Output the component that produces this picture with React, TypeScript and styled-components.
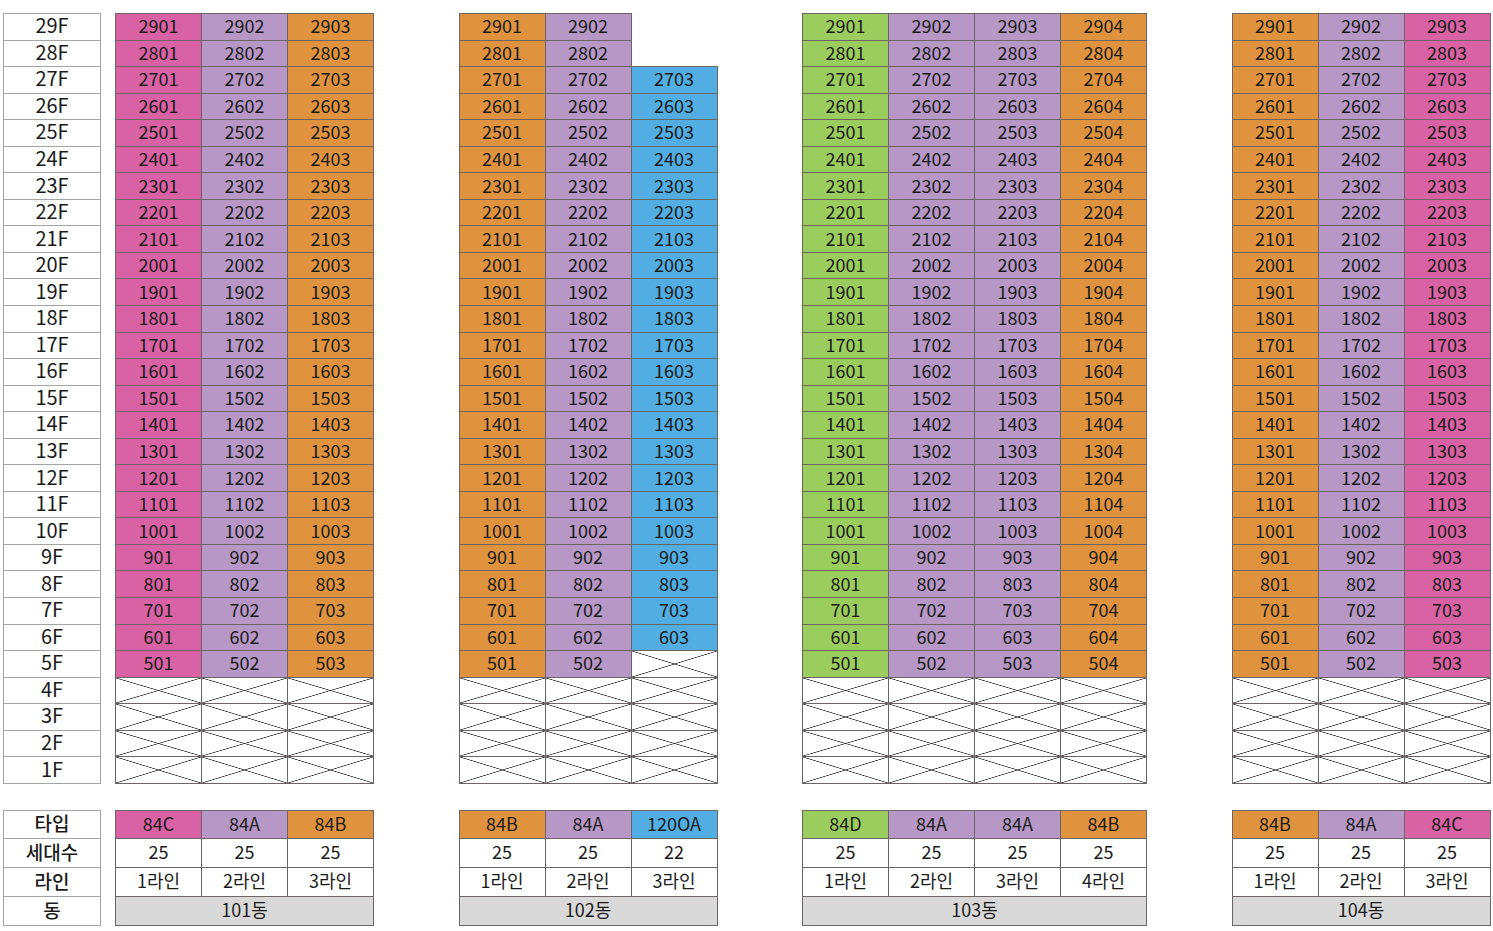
import styled, { createGlobalStyle, css } from "styled-components";

const GlobalStyle = createGlobalStyle`
    html, body {
        margin: 0;
        background: #fff;
    }
    body {
        font-family: "Noto Sans CJK KR", "Noto Sans", sans-serif;
        color: #1b1b1b;
    }
`

const COLORS: Record<string, string> = {
    pink: "#d862a3",
    lavender: "#b697c6",
    orange: "#e0933f",
    blue: "#52ade2",
    green: "#9bcd5e",
}

const ROW_H = 26.55
const TOP = 29

type Line = { color: string; type: string; from: number; to: number }
type Building = { name: string; lines: Line[] }

const buildings: Building[] = [
    {
        name: "101동",
        lines: [
            { color: "pink", type: "84C", from: 5, to: 29 },
            { color: "lavender", type: "84A", from: 5, to: 29 },
            { color: "orange", type: "84B", from: 5, to: 29 },
        ],
    },
    {
        name: "102동",
        lines: [
            { color: "orange", type: "84B", from: 5, to: 29 },
            { color: "lavender", type: "84A", from: 5, to: 29 },
            { color: "blue", type: "120OA", from: 6, to: 27 },
        ],
    },
    {
        name: "103동",
        lines: [
            { color: "green", type: "84D", from: 5, to: 29 },
            { color: "lavender", type: "84A", from: 5, to: 29 },
            { color: "lavender", type: "84A", from: 5, to: 29 },
            { color: "orange", type: "84B", from: 5, to: 29 },
        ],
    },
    {
        name: "104동",
        lines: [
            { color: "orange", type: "84B", from: 5, to: 29 },
            { color: "lavender", type: "84A", from: 5, to: 29 },
            { color: "pink", type: "84C", from: 5, to: 29 },
        ],
    },
]

const floors = Array.from({ length: TOP }, (_, i) => TOP - i)

const Page = styled.div`
    padding: 14px 0 0 4px;
    display: flex;
    flex-direction: column;
    gap: 27px;
`

const Section = styled.div`
    display: flex;
    align-items: flex-start;
`

const Buildings = styled.div`
    display: flex;
    gap: 85.5px;
    margin-left: 15px;
`

const LabelColumn = styled.div<{ $rows: string }>`
    display: grid;
    grid-template-columns: 97px;
    grid-template-rows: ${p => p.$rows};
`

const LabelCell = styled.div<{ $size?: number; $weight?: number }>`
    border: 1px solid #a4a4a4;
    margin: -1px 0 0 -1px;
    padding-bottom: 3px;
    display: flex;
    align-items: center;
    justify-content: center;
    font-size: ${p => p.$size ?? 20}px;
    font-weight: ${p => p.$weight ?? 400};
    line-height: 1;
`

const Tower = styled.div<{ $cols: number; $rows: string }>`
    display: grid;
    grid-template-columns: repeat(${p => p.$cols}, 86px);
    grid-template-rows: ${p => p.$rows};
`

const crossed = css`
    background:
        linear-gradient(to top right, transparent calc(50% - 0.7px), #2a2a2a 50%, transparent calc(50% + 0.7px)),
        linear-gradient(to bottom right, transparent calc(50% - 0.7px), #2a2a2a 50%, transparent calc(50% + 0.7px)),
        #fff;
`

const Unit = styled.div<{ $bg?: string; $crossed?: boolean; $empty?: boolean; $span?: number }>`
    border: 1px solid ${p => (p.$empty ? "transparent" : "#6d6466")};
    margin: -1px 0 0 -1px;
    padding-bottom: 3px;
    display: flex;
    align-items: center;
    justify-content: center;
    font-size: 18px;
    line-height: 1;
    background: ${p => p.$bg ?? "#fff"};
    ${p => p.$crossed && crossed}
    ${p => p.$empty && "background: transparent;"}
    ${p => p.$span && `grid-column: span ${p.$span};`}
`

const TOP_ROWS = `repeat(${TOP}, ${ROW_H}px)`
const BOTTOM_ROWS = "28px 29px 29px 29px"

const FloorGrid = ({ b }: { b: Building }) => (
    <Tower $cols={b.lines.length} $rows={TOP_ROWS}>
        {floors.map(f =>
            b.lines.map((l, i) => {
                const key = `${f}-${i}`
                if (f > l.to) return <Unit key={key} $empty />
                if (f < l.from) return <Unit key={key} $crossed />
                return (
                    <Unit key={key} $bg={COLORS[l.color]}>
                        {f}{String(i + 1).padStart(2, "0")}
                    </Unit>
                )
            })
        )}
    </Tower>
)

const SummaryGrid = ({ b }: { b: Building }) => (
    <Tower $cols={b.lines.length} $rows={BOTTOM_ROWS}>
        {b.lines.map((l, i) => (
            <Unit key={`t${i}`} $bg={COLORS[l.color]}>{l.type}</Unit>
        ))}
        {b.lines.map((l, i) => (
            <Unit key={`c${i}`}>{l.to - l.from + 1}</Unit>
        ))}
        {b.lines.map((_, i) => (
            <Unit key={`l${i}`}>{i + 1}라인</Unit>
        ))}
        <Unit $bg="#d9d9d9" $span={b.lines.length}>{b.name}</Unit>
    </Tower>
)

const App = () => {
    return (
        <>
            <GlobalStyle />
            <Page>
                <Section>
                    <LabelColumn $rows={TOP_ROWS}>
                        {floors.map(f => (
                            <LabelCell key={f}>{f}F</LabelCell>
                        ))}
                    </LabelColumn>
                    <Buildings>
                        {buildings.map(b => (
                            <FloorGrid key={b.name} b={b} />
                        ))}
                    </Buildings>
                </Section>
                <Section>
                    <LabelColumn $rows={BOTTOM_ROWS}>
                        {["타입", "세대수", "라인", "동"].map(t => (
                            <LabelCell key={t} $size={19} $weight={500}>{t}</LabelCell>
                        ))}
                    </LabelColumn>
                    <Buildings>
                        {buildings.map(b => (
                            <SummaryGrid key={b.name} b={b} />
                        ))}
                    </Buildings>
                </Section>
            </Page>
        </>
    )
}

export default App;
